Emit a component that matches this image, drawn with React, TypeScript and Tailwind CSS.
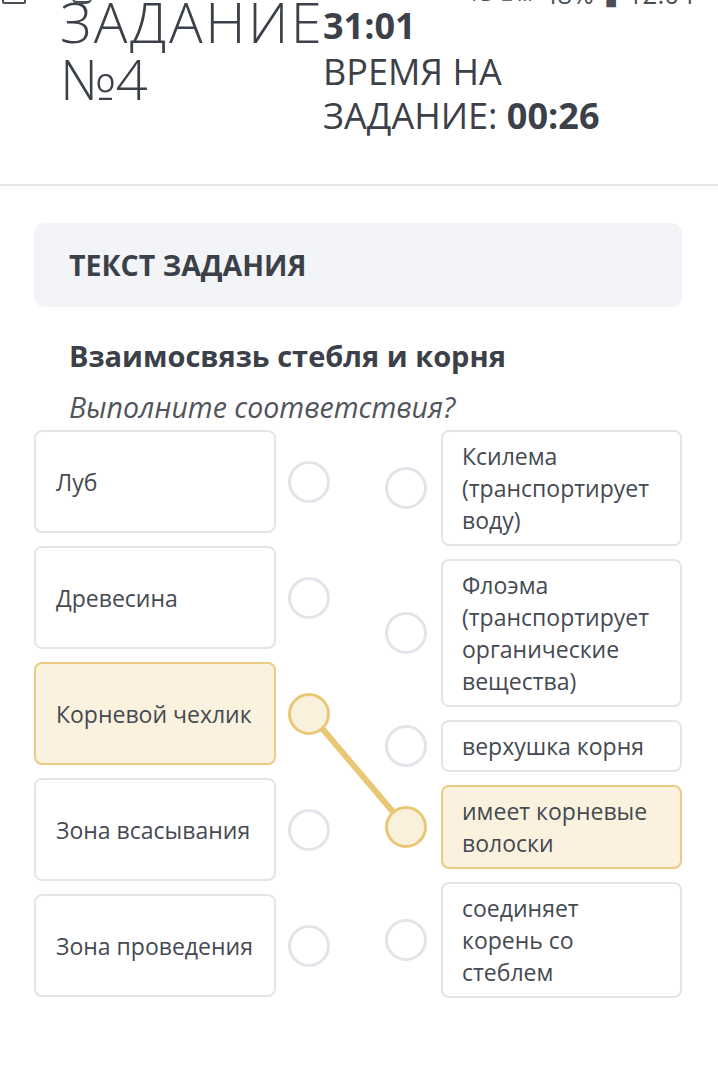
import React from "react";

const font = { fontFamily: '"Open Sans", "Noto Sans", sans-serif' };

type Item = { text: string; active?: boolean };

const leftItems: Item[] = [
  { text: "Луб" },
  { text: "Древесина" },
  { text: "Корневой чехлик", active: true },
  { text: "Зона всасывания" },
  { text: "Зона проведения" },
];

const rightItems: Item[] = [
  { text: "Ксилема (транспортирует воду)" },
  { text: "Флоэма (транспортирует органические вещества)" },
  { text: "верхушка корня" },
  { text: "имеет корневые волоски", active: true },
  { text: "соединяет корень со стеблем" },
];

function Dot({ active }: { active?: boolean }) {
  return (
    <div
      className={
        active
          ? "w-[42px] h-[42px] shrink-0 rounded-full border-[3px] border-[#e9c777] bg-[#faf1dc]"
          : "w-[42px] h-[42px] shrink-0 rounded-full border-[3px] border-[#e1e5e9] bg-white"
      }
    />
  );
}

export default function App() {
  return (
    <div className="relative w-[718px] min-h-[1091px] bg-white overflow-hidden text-[#3b4049]" style={font}>
      {/* status bar remnants */}
      <div className="absolute top-[-19px] right-[24px] text-[26px] leading-[26px] text-[#4a4f57] flex items-center gap-[10px] z-20">
        <span className="text-[20px]">4G</span>
        <span className="text-[20px]">▴ .ıl</span>
        <span>48%</span>
        <span>▮</span>
        <span>12:04</span>
      </div>
      <div className="absolute top-[-6px] left-[2px] w-[24px] h-[10px] border-[2px] border-[#4a4f57] rounded-[2px] z-20" />
      <div className="absolute top-[-8px] left-[72px] w-[20px] h-[12px] border-b-[3px] border-[#4a4f57] rounded-b-[6px] z-20" />

      {/* header */}
      <div className="h-[186px] border-b-2 border-[#e4e6e9] flex items-start pl-[60px]">
        <div className="w-[263px] shrink-0 mt-[-7px] text-[56px] leading-[57px] font-light text-[#3b4049] whitespace-nowrap">
          <span className="tracking-[2.5px]">ЗАДАНИЕ</span>
          <br />
          <span className="tracking-[-1px]">№4</span>
        </div>
        <div className="mt-[2px] text-[#3b4049] whitespace-nowrap">
          <div className="text-[36px] leading-[48px] font-bold">31:01</div>
          <div className="text-[36px] leading-[44px]">ВРЕМЯ НА</div>
          <div className="text-[36px] leading-[44px]">
            ЗАДАНИЕ: <span className="font-bold">00:26</span>
          </div>
        </div>
      </div>

      <div className="pl-[34px] pr-[36px]">
        {/* task card */}
        <div className="mt-[37px] h-[84px] rounded-[10px] bg-[#f3f4f7] flex items-center px-[35px]">
          <span className="text-[28.5px] font-bold text-[#3b4049]">ТЕКСТ ЗАДАНИЯ</span>
        </div>

        <div className="mt-[29px] px-[35px] text-[29px] leading-[40px] font-bold text-[#3b4049]">
          Взаимосвязь стебля и корня
        </div>
        <div className="mt-[11px] px-[35px] text-[28.5px] leading-[40px] italic text-[#50555c]">
          Выполните соответствия?
        </div>

        {/* matching */}
        <div className="relative mt-[3px] flex justify-between">
          <svg className="absolute left-0 top-0 w-[648px] h-[570px] pointer-events-none" viewBox="0 0 648 570">
            <line x1="275" y1="283" x2="371" y2="396" stroke="#e9c777" strokeWidth="6" strokeLinecap="round" />
          </svg>

          <div className="relative flex flex-col gap-[13px]">
            {leftItems.map((it) => (
              <div key={it.text} className="flex items-center gap-[12px]">
                <div
                  className={
                    (it.active
                      ? "bg-[#faf2de] border-[#ebcb82] "
                      : "bg-white border-[#e3e5e8] ") +
                    "w-[242px] h-[103px] rounded-[8px] border-2 flex items-center px-[20px] text-[23px] leading-[32px] text-[#454a52]"
                  }
                >
                  {it.text}
                </div>
                <Dot active={it.active} />
              </div>
            ))}
          </div>

          <div className="relative flex flex-col gap-[13px]">
            {rightItems.map((it) => (
              <div key={it.text} className="flex items-center gap-[14px]">
                <Dot active={it.active} />
                <div
                  className={
                    (it.active
                      ? "bg-[#faf2de] border-[#ebcb82] "
                      : "bg-white border-[#e3e5e8] ") +
                    "w-[241px] rounded-[8px] border-2 py-[8px] pl-[19px] pr-[26px] text-[23px] leading-[32px] text-[#454a52]"
                  }
                >
                  {it.text}
                </div>
              </div>
            ))}
          </div>
        </div>
      </div>
    </div>
  );
}
